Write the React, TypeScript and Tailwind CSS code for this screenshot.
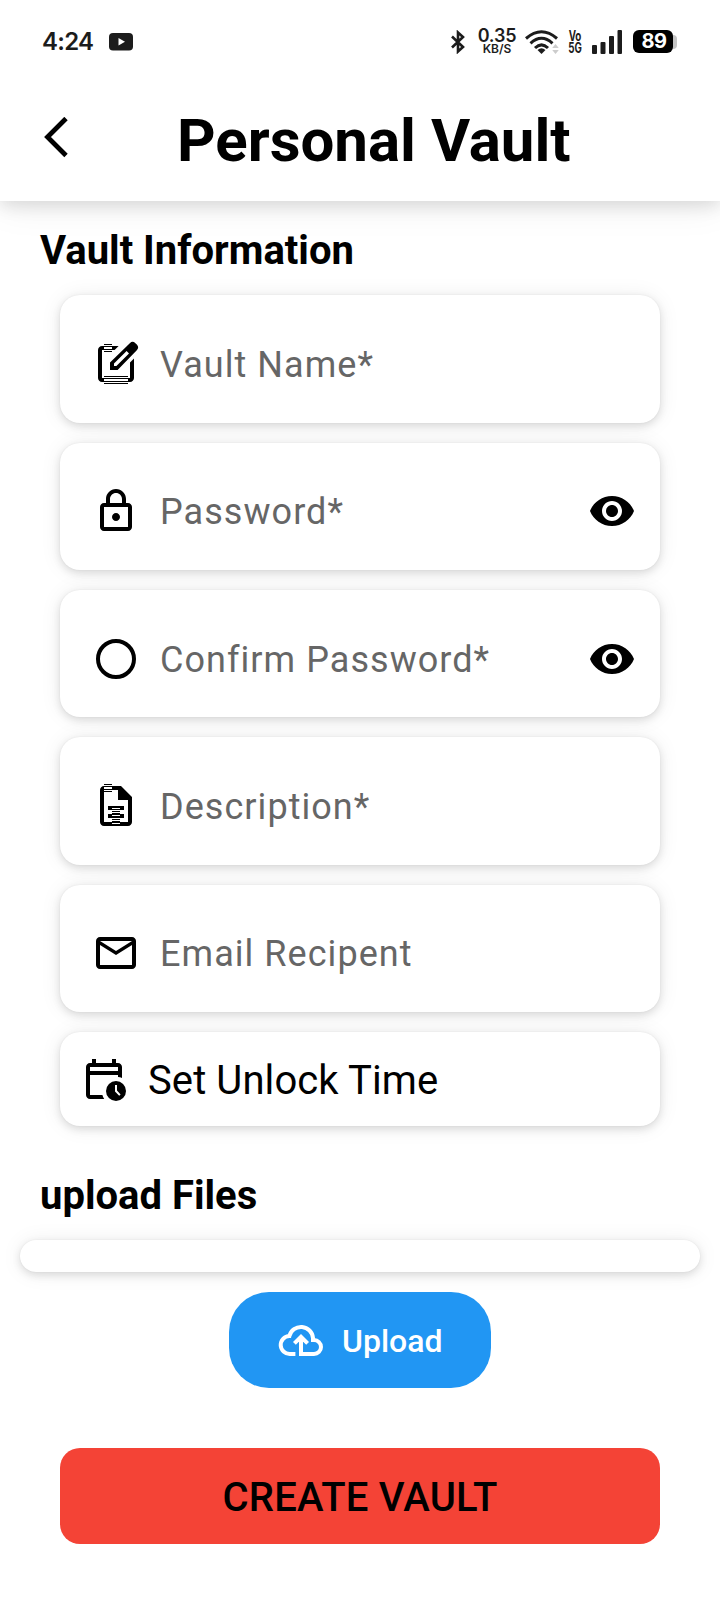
import type { ReactNode } from "react";

function Icon({ children, className = "size-12" }: { children: ReactNode; className?: string }) {
  return (
    <svg viewBox="0 0 24 24" fill="currentColor" className={`shrink-0 ${className}`} aria-hidden="true">
      {children}
    </svg>
  );
}

const EditIcon = () => (
  <Icon>
    <path d="M13.3 3H5c-1.1 0-2 .9-2 2v14c0 1.1.9 2 2 2h14c1.1 0 2-.9 2-2V9.200l-2 2V19H5V5h6.300z" />
    <path fillRule="evenodd" d="M22.400 2.300 21.700 1.600a2 2 0 0 0-2.800 0L9 11.200V15h3.800l9.600-9.900a2 2 0 0 0 0-2.800zM12.200 13H11v-1.200l6.300-6.300 1.200 1.200z" />
    <path fill="white" d="M6 2.500h4V5H6zM6 18.500h12V21H6z" />
    <path d="M6 2h4v.5H6zM6 3h4v.5H6zM6 4.500h4V5H6zM6 5.500h4V6H6zM6 18h12v.5H6zM6 19h12v.5H6zM6 20.500h12v.5H6zM6 21.500h12v.5H6z" />
  </Icon>
);

const LockIcon = () => (
  <Icon>
    <path d="M18 8h-1V6c0-2.760-2.240-5-5-5S7 3.240 7 6v2H6c-1.100 0-2 .9-2 2v10c0 1.100.9 2 2 2h12c1.100 0 2-.9 2-2V10c0-1.100-.9-2-2-2zM9 6c0-1.660 1.340-3 3-3s3 1.340 3 3v2H9V6zm9 14H6V10h12v10zm-6-3c1.100 0 2-.9 2-2s-.9-2-2-2-2 .9-2 2 .9 2 2 2z" />
  </Icon>
);

const CircleIcon = () => (
  <Icon>
    <circle cx="12" cy="12" r="9" fill="none" stroke="currentColor" strokeWidth="2" />
  </Icon>
);

const FileIcon = () => (
  <Icon>
    <path fillRule="evenodd" d="M14.500 2H6c-1.100 0-2 .9-2 2v16c0 1.100.9 2 2 2h12c1.100 0 2-.9 2-2V7.500zM6 4h7v5h5v11H6z" />
    <path d="M8 12h8v2H8zM8 16h8v2H8z" />
    <path fill="white" d="M6 1.500h4V4H6zM10 13h4v.5h-4zM10 16.500h4v.5h-4zM10 20.500h4v.5h-4z" />
    <path d="M6 1h4v.5H6zM6 2h4v.5H6zM6 3.500h4V4H6zM6 4.500h4V5H6zM10 14.500h4v.5h-4zM10 15.500h4v.5h-4zM10 18.500h4v.5h-4zM10 19.500h4v.5h-4z" />
  </Icon>
);

const MailIcon = () => (
  <Icon>
    <path d="M22 6c0-1.100-.9-2-2-2H4c-1.100 0-2 .9-2 2v12c0 1.100.9 2 2 2h16c1.100 0 2-.9 2-2V6zm-2 0-8 4.990L4 6h16zm0 12H4V8l8 5 8-5v10z" />
  </Icon>
);

const EyeIcon = () => (
  <Icon>
    <path d="M12 4.500C7 4.500 2.730 7.610 1 12c1.730 4.390 6 7.500 11 7.500s9.270-3.110 11-7.500c-1.730-4.390-6-7.500-11-7.500zM12 17c-2.760 0-5-2.240-5-5s2.240-5 5-5 5 2.240 5 5-2.240 5-5 5zm0-8c-1.660 0-3 1.340-3 3s1.340 3 3 3 3-1.340 3-3-1.340-3-3-3z" />
  </Icon>
);

const CalendarClockIcon = () => (
  <Icon>
    <path
      fillRule="evenodd"
      d="M5 22c-1.100 0-2-.9-2-2V6c0-1.100.9-2 2-2h1V2h2v2h8V2h2v2h1c1.100 0 2 .9 2 2v5.500q-.9-.4-2-.5v-1H5v10h6.200q.3 1.100.9 2zM5 6v2h14V6z"
    />
    <circle cx="18" cy="18" r="5" />
    <path d="M17.500 15h1v2.800l1.800 1.900-.7.700-2.100-2.200z" fill="white" />
  </Icon>
);

const CloudUploadIcon = () => (
  <Icon>
    <path
      fill="none"
      stroke="currentColor"
      strokeWidth="2"
      d="M9.200 19H6.500A4.500 4.500 0 0 1 6.200 10A6 6 0 0 1 18 11v1h.5a3.500 3.500 0 0 1 0 7H12v-8M8.700 13.700 12 10.400l3.300 3.300"
    />
  </Icon>
);

function Card({ children, className }: { children?: ReactNode; className: string }) {
  return (
    <div className={`bg-white shadow-[0_3px_9px_rgba(0,0,0,0.12),0_1px_22px_rgba(0,0,0,0.07),0_0_2px_rgba(0,0,0,0.06)] ${className}`}>
      {children}
    </div>
  );
}

function Field({ icon, label, secret }: { icon: ReactNode; label: string; secret?: boolean }) {
  return (
    <Card className="flex h-[127.33px] items-center rounded-[20px] pt-2.5 pr-6 pl-8">
      {icon}
      <span className="ml-5 flex-1 pt-0.5 text-[36px] leading-[48px] tracking-[1.05px] text-[#666]">{label}</span>
      {secret && <EyeIcon />}
    </Card>
  );
}

function StatusBar() {
  return (
    <div className="flex h-[83px] items-center pl-[42px] font-['Inter',sans-serif] font-semibold text-[#1c1c1c]">
      <span className="w-[67px] text-[24px] leading-6 tracking-[-0.700px]">4:24</span>
      <svg viewBox="0 0 24 18" className="h-[18px] w-6">
        <rect width="24" height="17.500" rx="4" fill="#1c1c1c" />
        <path d="M9.500 5v7.500L16 8.800z" fill="white" />
      </svg>
      <svg viewBox="0 0 14 24" className="ml-[318px] h-6 w-3.5" fill="none" stroke="currentColor" strokeWidth="2.600">
        <path d="M1 6.500 12 17 7 21.500v-19L12 7 1 17.500" />
      </svg>
      <div className="ml-3 flex w-[40px] flex-col items-center whitespace-nowrap">
        <span className="text-[18px] leading-[15px] tracking-[-0.200px]">0.35</span>
        <span className="text-[12px] leading-[12px]">KB/S</span>
      </div>
      <svg viewBox="0 0 34 24" className="ml-2 h-6 w-[34px]" fill="none" stroke="currentColor" strokeWidth="3">
        <path d="M1 8.500Q16.500-5 32 8.500M5.500 13.300q11-10 22 0M10 18q6.500-6.300 13 0" />
        <path d="M12.500 20q4-3.500 8 0l-4 4z" fill="currentColor" stroke="none" />
        <path d="m30.500 14 3.300 4h-6.600zM30.500 24l3.300-4h-6.600z" fill="#ccc" stroke="none" />
      </svg>
      <div className="ml-[9px] flex w-[14px] scale-x-70 flex-col items-center text-[14px] leading-[11.500px] font-bold">
        <span>Vo</span>
        <span>5G</span>
      </div>
      <svg viewBox="0 0 30 24" className="ml-[10px] h-6 w-[30px]" fill="currentColor">
        <rect y="15" width="5" height="9" rx="1" />
        <rect x="8.500" y="12" width="5" height="12" rx="1" />
        <rect x="17" y="6" width="5" height="18" rx="1" />
        <rect x="25.500" width="4.500" height="24" rx="1" />
      </svg>
      <div className="ml-[11px] flex h-[23px] w-[40px] items-center justify-center rounded-[6px] bg-black pl-0.5 text-[20px] leading-[23px] font-bold tracking-[-0.500px] text-white">89</div>
      <div className="h-[14px] w-[4px] rounded-r-[4px] bg-[#c4c4c4]" />
    </div>
  );
}

export default function App() {
  return (
    <div className="h-[1600px] w-[720px] overflow-hidden bg-white font-['Roboto',sans-serif] text-black">
      <header className="relative h-[201px] bg-white shadow-[0_5px_16px_rgba(0,0,0,0.11),0_4px_36px_rgba(0,0,0,0.08)]">
        <StatusBar />
        <div className="flex h-[112px] items-center pl-[42px]">
          <svg viewBox="0 0 28 44" className="h-11 w-7" fill="none" stroke="currentColor" strokeWidth="4.800">
            <path d="M24 1.500 5.500 20 24 38.500" />
          </svg>
          <h1 className="ml-[107px] pt-[3px] text-[60px] leading-[70px] font-bold whitespace-nowrap">Personal Vault</h1>
        </div>
      </header>
      <main>
        <h2 className="h-[94.300px] pt-[26px] pl-10 text-[40px] leading-[47px] font-bold">Vault Information</h2>
        <div className="flex flex-col gap-5 px-[60px]">
          <Field icon={<EditIcon />} label="Vault Name*" />
          <Field icon={<LockIcon />} label="Password*" secret />
          <Field icon={<CircleIcon />} label="Confirm Password*" secret />
          <Field icon={<FileIcon />} label="Description*" />
          <Field icon={<MailIcon />} label="Email Recipent" />
          <Card className="flex h-[94px] items-center rounded-[20px] pl-5">
            <CalendarClockIcon />
            <span className="ml-5 pt-1 text-[40px] leading-[48px] tracking-[0.100px]">Set Unlock Time</span>
          </Card>
        </div>
        <h2 className="mt-[46px] h-[68px] pl-10 text-[40px] leading-[47px] font-bold">upload Files</h2>
        <Card className="mx-5 h-8 rounded-[16px]" />
        <div className="mt-5 flex justify-center">
          <button className="flex h-24 w-[262px] items-center rounded-[40px] bg-[#2196f3] pl-12 text-white">
            <CloudUploadIcon />
            <span className="ml-[17px] pt-0.5 text-[32px] leading-10 font-medium">Upload</span>
          </button>
        </div>
        <div className="mt-[60px] px-[60px]">
          <button className="h-24 w-full rounded-[20px] bg-[#f44336] pt-1 text-[40px] font-medium tracking-[0.200px]">CREATE VAULT</button>
        </div>
      </main>
    </div>
  );
}
